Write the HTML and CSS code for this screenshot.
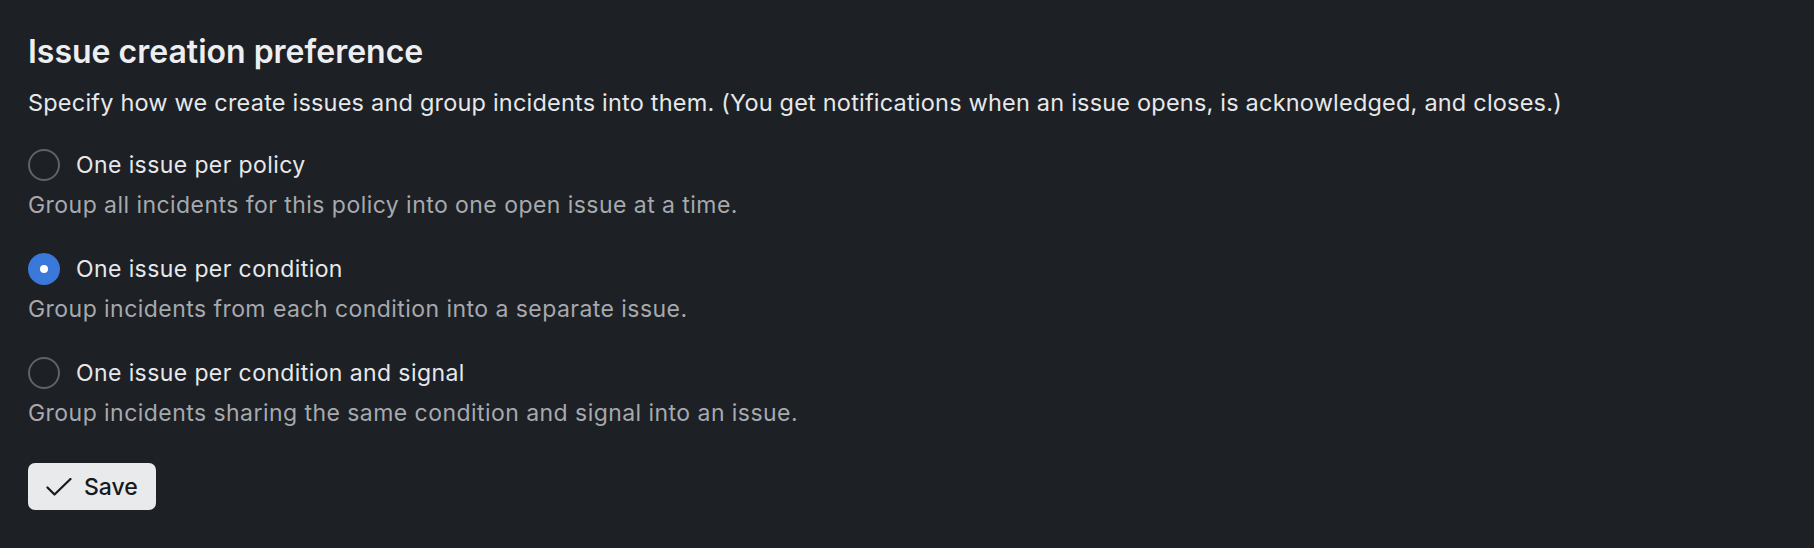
FILE: index.html
```html
<!DOCTYPE html>
<html lang="en">
<head>
<meta charset="utf-8">
<title>Issue creation preference</title>
<link rel="stylesheet" href="styles.css">
</head>
<body>
<section class="panel">
  <h2 class="title">Issue creation preference</h2>
  <p class="intro">Specify how we create issues and group incidents into them. (You get notifications when an issue opens, is acknowledged, and closes.)</p>
  <div class="options">
    <label class="option">
      <span class="row"><input type="radio" name="pref" class="radio"><span class="label">One issue per policy</span></span>
      <span class="desc">Group all incidents for this policy into one open issue at a time.</span>
    </label>
    <label class="option">
      <span class="row"><input type="radio" name="pref" class="radio" checked><span class="label">One issue per condition</span></span>
      <span class="desc">Group incidents from each condition into a separate issue.</span>
    </label>
    <label class="option">
      <span class="row"><input type="radio" name="pref" class="radio"><span class="label">One issue per condition and signal</span></span>
      <span class="desc">Group incidents sharing the same condition and signal into an issue.</span>
    </label>
  </div>
  <button class="save" type="button">
    <svg class="check" width="26" height="18" viewBox="0 0 26 18" fill="none"><path d="M1.5 9.5 L8.5 16.5 L24.5 1" stroke="#17191c" stroke-width="2.2" stroke-linecap="round" stroke-linejoin="round"/></svg>
    <span>Save</span>
  </button>
</section>
</body>
</html>
```

FILE: styles.css
```css
html, body {
  margin: 0;
  padding: 0;
  background: #1d2025;
}
body {
  font-family: Inter, "Noto Sans", sans-serif;
  color: #e6e8ea;
  width: 1814px;
  height: 548px;
  overflow: hidden;
}
.panel {
  padding: 34px 28px 0 28px;
  display: flex;
  flex-direction: column;
  align-items: flex-start;
}
.title {
  margin: 0;
  font-size: 32px;
  line-height: 36px;
  font-weight: 600;
  color: #eceef0;
}
.intro {
  margin: 18px 0 0 0;
  font-size: 23.5px;
  line-height: 30px;
  letter-spacing: 0.2px;
  color: #e6e8ea;
}
.options {
  margin-top: 31px;
  display: flex;
  flex-direction: column;
  gap: 33px;
}
.option {
  display: flex;
  flex-direction: column;
  cursor: pointer;
}
.row {
  display: flex;
  align-items: center;
  gap: 16px;
  height: 32px;
}
.radio {
  appearance: none;
  -webkit-appearance: none;
  margin: 0;
  width: 32px;
  height: 32px;
  border-radius: 50%;
  border: 2px solid #5f6368;
  box-sizing: border-box;
  background: transparent;
  display: grid;
  place-items: center;
}
.radio:checked {
  background: #3a78d9;
  border-color: #3a78d9;
}
.radio:checked::after {
  content: "";
  width: 8px;
  height: 8px;
  border-radius: 50%;
  background: #ffffff;
}
.label {
  font-size: 23px;
  line-height: 32px;
  letter-spacing: 0.4px;
  color: #e6e8ea;
}
.desc {
  margin-top: 9px;
  font-size: 23px;
  line-height: 30px;
  letter-spacing: 0.45px;
  color: #a6a9ad;
}
.save {
  margin-top: 35px;
  height: 47px;
  padding: 0 18px 0 18px;
  border: none;
  border-radius: 7px;
  background: #e8eaeb;
  display: flex;
  align-items: center;
  gap: 12px;
  font-family: Inter, "Noto Sans", sans-serif;
  font-size: 23px;
  font-weight: 500;
  color: #17191c;
}
.check {
  display: block;
}
```
